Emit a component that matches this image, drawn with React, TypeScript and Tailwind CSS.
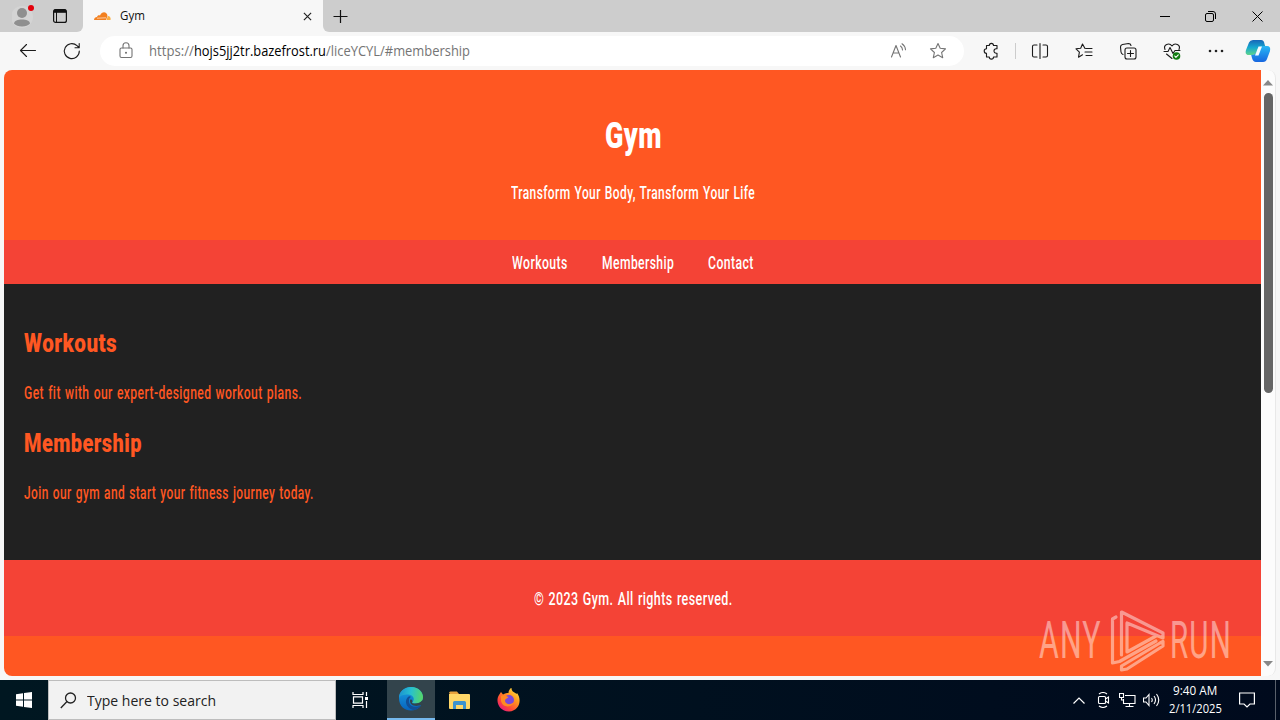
import { useLayoutEffect, useRef, type ReactNode } from "react";

function Fit({ w, className = "", children }: { w: number; className?: string; children: ReactNode }) {
  const ref = useRef<HTMLSpanElement>(null);
  useLayoutEffect(() => {
    const el = ref.current;
    if (el) el.style.transform = `scaleX(${w / el.offsetWidth})`;
  }, [w]);
  return (
    <span className={`block shrink-0 whitespace-nowrap ${className}`} style={{ width: w }}>
      <span ref={ref} className="inline-block origin-left">{children}</span>
    </span>
  );
}

function Icon({ size = 20, className = "", children }: { size?: number; className?: string; children: ReactNode }) {
  return (
    <svg width={size} height={size} viewBox="0 0 20 20" fill="none" stroke="currentColor" strokeWidth="1.1" strokeLinecap="round" strokeLinejoin="round" className={`block shrink-0 ${className}`}>
      {children}
    </svg>
  );
}

const star = "M10 2.500l2.200 4.800 5.300.6-3.900 3.600 1.100 5.200L10 14.100l-4.700 2.600 1.100-5.200L2.500 7.900l5.300-.6z";

function TabBar() {
  return (
    <div className="flex h-8 bg-[#f7f7f7]">
      <div className="flex h-8 w-[83px] shrink-0 rounded-br-md bg-[#cdcdcd] pl-3">
        <svg width="24" height="32" viewBox="0 0 24 32" className="block">
          <circle cx="10" cy="17" r="11" fill="#d4d4d4" />
          <circle cx="10" cy="13" r="5" fill="#8f8f8f" />
          <path d="M2 23.500c0-5.500 16-5.500 16 0-3 4-13 4-16 0z" fill="#8f8f8f" />
          <circle cx="19" cy="8" r="3" fill="#e3000b" />
        </svg>
        <svg width="16" height="32" viewBox="0 0 16 32" className="ml-4 block" fill="none" stroke="#111" strokeWidth="1.2">
          <rect x="1.600" y="9.600" width="12.800" height="12.800" rx="2" />
          <path d="M2 11.200h12" strokeWidth="3.200" />
          <path d="M4.500 12v10" strokeWidth="1" />
        </svg>
      </div>
      <div className="flex h-8 w-[240px] shrink-0 items-center pl-[11px]">
        <svg width="17" height="9" viewBox="0 0 17 9" className="block">
          <path d="M0 8c0-2 1.500-3 3-3C3.500 3 5 3 6 3.500 8-1 13-.5 13.500 4L12 8z" fill="#f38020" />
          <path d="M12.500 8l1.400-4C16 4 17 6 16.500 8z" fill="#fbad41" />
          <path d="M3 6.200l9-.4" stroke="#fff" strokeWidth=".6" />
        </svg>
        <Fit w={25} className="ml-[9px] font-['Open_Sans',sans-serif] text-[12.500px] text-[#111]">Gym</Fit>
        <svg width="9" height="9" viewBox="0 0 10 10" className="ml-[158px] block" stroke="#222" strokeWidth="1.3"><path d="M1 1l8 8M9 1L1 9" /></svg>
      </div>
      <div className="flex h-8 flex-1 items-center rounded-bl-md bg-[#cdcdcd] pl-[10px]">
        <svg width="15" height="15" viewBox="0 0 15 15" className="block" stroke="#111" strokeWidth="1.2"><path d="M7.500 1v13M.5 7.500h14" /></svg>
        <div className="ml-auto flex items-center gap-9 pr-[17px] text-black">
          <svg width="10" height="11" viewBox="0 0 10 11" stroke="currentColor" className="relative left-px"><path d="M0 5.500h10" /></svg>
          <svg width="11" height="11" viewBox="0 0 11 11" fill="none" stroke="currentColor"><rect x=".5" y="2.500" width="8" height="8" rx="1.500" /><path d="M3 .5h5q2.500 0 2.500 2.500v5" /></svg>
          <svg width="11" height="11" viewBox="0 0 11 11" stroke="currentColor"><path d="M.5.5l10 10M10.500.5l-10 10" /></svg>
        </div>
      </div>
    </div>
  );
}

function Toolbar() {
  return (
    <div className="flex h-[38px] items-center bg-[#f7f7f7] pl-[18px] text-[#1b1b1b]">
      <Icon><path d="M17.500 9.500h-15M8.500 3.500l-6 6 6 6" /></Icon>
      <Icon className="ml-6"><path d="M17.300 10A7.500 7.500 0 1 1 15 4.700l2 2M17.200 2.500v4.200H13" /></Icon>
      <div className="ml-[18px] flex h-[30px] w-[864px] shrink-0 items-center rounded-full bg-white pl-4 text-[#747474]">
        <Icon><rect x="4" y="7" width="12" height="9.500" rx="1.500" /><path d="M7 7V4.700a3 3 0 0 1 6 0V7" /><circle cx="10" cy="11.800" r=".5" fill="currentColor" /></Icon>
        <div className="ml-[13px] flex font-['Open_Sans',sans-serif] text-[14px] leading-5">
          <Fit w={45}>https://</Fit>
          <Fit w={132} className="text-black">hojs5jj2tr.bazefrost.ru</Fit>
          <Fit w={144}>/liceYCYL/#membership</Fit>
        </div>
        <Icon className="ml-auto"><path d="M3.500 16L8 4.500 12.500 16M5 12h6M12.500 5a5 5 0 0 1 2 4M14 2.800a8 8 0 0 1 3.500 6" /></Icon>
        <Icon className="mr-4 ml-5"><path d={star} /></Icon>
      </div>
      <Icon className="ml-[17px]"><path d="M5.500 4.500h2.800a2.100 2.100 0 0 1 4.200 0h3.500v3.300h-.8a2.200 2.200 0 0 0 0 4.400h.8v3.800h-3.500a2.100 2.100 0 0 1-4.200 0H5.500v-3.600a2.300 2.300 0 0 1 0-4.600z" /></Icon>
      <div className="ml-[14px] h-4 w-px bg-[#ccc]" />
      <Icon className="ml-[14px]"><path d="M7 4H4q-1.500 0-1.500 1.500v9Q2.500 16 4 16h3M13 4h3q1.500 0 1.500 1.500v9Q17.500 16 16 16h-3M10 2.500v15" /></Icon>
      <Icon className="ml-6"><path d="M11 7.500L8.500 3 6.700 7.200l-4.700.6 3.400 3.400-.9 5 4-2.400M12 7.500h6M11 11h7M12 14.500h6" /></Icon>
      <Icon className="ml-6"><rect x="7" y="7" width="11" height="11" rx="2" /><path d="M12.500 9.500v6M9.500 12.500h6M5 13.500a3 3 0 0 1-2-2.500L2.500 6q0-2 2-2.500l6-1q2 0 2.500 2" /></Icon>
      <Icon className="ml-6"><path d="M3 8.500C1 4 7 1 10 5c3-4 9-1 7 3.500M2 10.500h4l2-4 3 6 2-3h5M4.500 13l5.500 4.500" /><circle cx="14.500" cy="15" r="3.800" fill="#107c10" stroke="none" /><path d="M12.700 15l1.200 1.300 2.400-2.500" stroke="#fff" /></Icon>
      <svg width="16" height="4" viewBox="0 0 16 4" className="ml-[26px] block" fill="#222"><circle cx="2" cy="2" r="1.300" /><circle cx="8" cy="2" r="1.300" /><circle cx="14" cy="2" r="1.300" /></svg>
      <svg width="26" height="24" viewBox="0 0 26 24" className="ml-[21px] block shrink-0">
        <defs>
          <linearGradient id="copA" x1="0" y1="0" x2="0" y2="1"><stop stopColor="#1766b8" /><stop offset=".5" stopColor="#16a8cf" /><stop offset="1" stopColor="#5fd58b" /></linearGradient>
          <linearGradient id="copB" x1="0" y1="0" x2="0" y2="1"><stop stopColor="#28b8f5" /><stop offset="1" stopColor="#1766df" /></linearGradient>
        </defs>
        <path d="M8 1h8q3 0 3.500 4l1 3h-5q-2 0-3 3l-1 3q-1 2-4 2H4q-4.500 0-3-5L4 3.500Q5 1 8 1z" fill="url(#copA)" />
        <path d="M19 7h3q4 0 3 5l-3 8q-1 3-4 3h-7q-3 0-4-4l-.8-3q4.300 0 5.300-3l2-4q1-2 5.500-2z" fill="url(#copB)" />
        <path d="M13.500 7.500h3.500l-3.500 9H10z" fill="#f5fbff" />
      </svg>
    </div>
  );
}

function Watermark() {
  return (
    <div className="absolute top-[609px] left-[1039px] flex h-[64px] items-center text-white opacity-45">
      <Fit w={63} className="font-[Roboto,sans-serif] text-[51px] leading-[66px] tracking-[2px]">ANY</Fit>
      <svg width="56" height="64" viewBox="0 0 56 64" className="ml-2 block" fill="none" stroke="currentColor" strokeWidth="3.200" strokeLinejoin="round" strokeLinecap="round">
        <path d="M6 8L2.500 10v44l7-1.500L46 32M11.500 46V3L53 24v5L17 14M17 14v29l29-16M11.500 61v-4L50 34l3-1.500V37l-36 23z" />
      </svg>
      <Fit w={62} className="ml-1 font-[Roboto,sans-serif] text-[51px] leading-[66px] tracking-[2px]">RUN</Fit>
    </div>
  );
}

function Site() {
  return (
    <div className="flex h-[610px] bg-[#f7f7f7] pl-1">
      <div className="flex h-[606px] w-[1257px] shrink-0 flex-col overflow-hidden rounded-l-lg bg-[#ff5722] font-[Roboto,sans-serif] text-[17.500px] leading-6 font-medium tracking-[0.6px] [word-spacing:1px] text-white">
        <header className="flex h-[170px] flex-col items-center pt-[42px]">
          <h1 className="relative left-px"><Fit w={57} className="text-[36px] leading-[48px] font-black">Gym</Fit></h1>
          <p className="mt-[21px]"><Fit w={244}>Transform Your Body, Transform Your Life</Fit></p>
        </header>
        <nav className="flex h-11 items-center justify-center gap-[34px] bg-[#f44336] pt-px">
          <Fit w={56}>Workouts</Fit>
          <Fit w={72}>Membership</Fit>
          <Fit w={46}>Contact</Fit>
        </nav>
        <main className="h-[276px] bg-[#212121] px-5 pt-[41px] text-[#ff5722]">
          <h2><Fit w={93} className="text-[26px] leading-9 font-black">Workouts</Fit></h2>
          <p className="mt-5"><Fit w={278}>Get fit with our expert-designed workout plans.</Fit></p>
          <h2 className="mt-5"><Fit w={118} className="text-[26px] leading-9 font-black">Membership</Fit></h2>
          <p className="mt-5"><Fit w={290}>Join our gym and start your fitness journey today.</Fit></p>
        </main>
        <footer className="flex h-[76px] items-center justify-center bg-[#f44336] pt-px pl-px">
          <Fit w={199}>© 2023 Gym. All rights reserved.</Fit>
        </footer>
      </div>
      <div className="flex h-[606px] w-[15px] flex-col items-center rounded-r-lg border-r border-[#e8e8e8] bg-[#fcfcfc]">
        <svg width="10" height="6" viewBox="0 0 10 6" className="mt-[10px] block"><path d="M0 5.500L5 0l5 5.500z" fill="#888" /></svg>
        <div className="mt-[7px] h-[300px] w-[9px] rounded-full bg-[#666]" />
        <svg width="10" height="6" viewBox="0 0 10 6" className="mt-auto mb-[9px] block"><path d="M0 0l5 5.500L10 0z" fill="#888" /></svg>
      </div>
    </div>
  );
}

function Taskbar() {
  return (
    <div className="flex h-10 bg-linear-to-r from-[#001721] to-[#000a1d] text-white">
      <div className="flex w-12 items-center justify-center">
        <svg width="16" height="16" viewBox="0 0 16 16" fill="#fff"><path d="M0 2.200L7 1.200v6.300H0zM8 1.100L16 0v7.500H8zM0 8.500h7v6.300l-7-1zM8 8.500h8V16l-8-1.100z" /></svg>
      </div>
      <div className="flex w-72 items-center border border-[#bdbdbd] bg-[#f2f2f2] pl-[11px] text-[#222]">
        <svg width="17" height="17" viewBox="0 0 17 17" fill="none" stroke="currentColor" strokeWidth="1.300"><circle cx="10.500" cy="6" r="5" /><path d="M7 9.500L.8 16" /></svg>
        <Fit w={129} className="ml-[10px] font-['Open_Sans',sans-serif] text-[15px]">Type here to search</Fit>
      </div>
      <div className="flex w-[51px] items-center pl-4">
        <svg width="17" height="16" viewBox="0 0 17 16" fill="none" stroke="#fff" strokeWidth="1.200"><path d="M1 0v2.500h10V0M1 16v-2.500h10V16M1.500 4.800h9v6.400h-9zM14.500 0v4M14.500 9v7" /><path d="M13 5h3v3h-3z" fill="#fff" stroke="none" /></svg>
      </div>
      <div className="flex w-12 items-center justify-center border-b-2 border-[#76b9ed] bg-[#33444c]">
        <svg width="24" height="24" viewBox="0 0 24 24">
          <defs>
            <linearGradient id="edgeA" x1="0" y1=".2" x2="1" y2=".3"><stop stopColor="#1b91d0" /><stop offset=".5" stopColor="#28c0cf" /><stop offset="1" stopColor="#55d66a" /></linearGradient>
            <linearGradient id="edgeB" x1="0" y1="0" x2="0" y2="1"><stop stopColor="#1aa1e3" /><stop offset="1" stopColor="#0763bd" /></linearGradient>
          </defs>
          <path d="M0 11C0 5 5 0 12 0c8 0 12 6 12 10 0 5-4 7-8 7h5l1 1.500C16 27 0 25 0 11z" fill="url(#edgeB)" />
          <path d="M0 11C0 4 6 0 12 0c8 0 12 6 12 10 0 5-4 6.500-8 6.500-3 0-3-1-2-2 2-3 0-7-5-7-4 0-8 1-9 3.500z" fill="url(#edgeA)" />
          <path d="M9 10c-5 5 0 13 7 13 3-1 5-3 6-5-6 4-13 1-12-5 0-2 1-2 2-3-1-1-2-1-3 0z" fill="#124f96" />
          <path d="M13.500 14.500c-.8 1-1 2 2.500 2 3 0 6-1 7.500-3.500l-.5 4.500c-6 3-12 1-12-3.500 0-2 2-2 2.500.5z" fill="#33444c" />
        </svg>
      </div>
      <div className="flex w-[49px] items-center justify-center">
        <svg width="22" height="19" viewBox="0 0 22 19"><path d="M0 2Q0 .5 1.500.5H8L10 3h-9z" fill="#e8a33d" /><path d="M0 3h20q1 0 1 1v13q0 1-1 1H1q-1 0-1-1z" fill="#ffd768" /><path d="M4 11.500Q4 10 5.500 10h10q1.500 0 1.500 1.500V18h-3v-4H7v4H4z" fill="#3d93cf" /></svg>
      </div>
      <div className="flex w-[49px] items-center justify-center">
        <svg width="24" height="24" viewBox="0 0 24 24">
          <defs><linearGradient id="ff" x1="1" y1="0" x2=".2" y2="1"><stop stopColor="#fff44f" /><stop offset=".4" stopColor="#ff9a1f" /><stop offset=".75" stopColor="#ff4638" /><stop offset="1" stopColor="#e31587" /></linearGradient></defs>
          <path d="M4 4l2 2.500C8 5 10 5 11.500 5c0-3 2-5 3-5 0 4 3 4 5 6l.5-1c5 6 3 18-8 18.500C2 23.500-2 13 2 7z" fill="url(#ff)" />
          <circle cx="12" cy="12" r="5" fill="#7b48d8" />
          <path d="M4 8c3-2 5 0 7.500 1-1 2-3.500 1-3.500 4 1 4 6 4 9 1-1 5-11 7-13-1z" fill="#ff8a22" />
        </svg>
      </div>
      <div className="ml-auto flex items-center">
        <svg width="12" height="7" viewBox="0 0 12 7" fill="none" stroke="#fff" strokeWidth="1.200"><path d="M.5 6.500L6 1l5.500 5.500" /></svg>
        <svg width="13" height="16" viewBox="0 0 13 16" className="ml-3 block" fill="none" stroke="#fff" strokeWidth="1.100"><rect x="1.500" y="4.500" width="7" height="7" rx="1" /><path d="M8.500 7l3-2v6l-3-2M2 2q4-3 8 0M2 14q4 3 8 0" /></svg>
        <svg width="17" height="14" viewBox="0 0 17 14" className="ml-[9px] block" fill="none" stroke="#fff" strokeWidth="1.100"><path d="M6 2.500h10v8H4.500V6M10.500 10.500v3M6.500 13.500h8M.5.5h4v4h-4zM2.500 4.500V7h2" /></svg>
        <svg width="17" height="14" viewBox="0 0 17 14" className="ml-[7px] block" fill="none" stroke="#fff" strokeWidth="1.100"><path d="M.5 5h2.500l3-3.500v11L3 9H.5zM8.500 5q1.500 2 0 4M11 3q3 4 0 8M13.500 1q4.500 6 0 12" /></svg>
        <div className="ml-[9px] flex w-[53px] flex-col font-['Open_Sans',sans-serif] text-[12px] leading-[18px]">
          <Fit w={44} className="ml-1">9:40 AM</Fit>
          <Fit w={53}>2/11/2025</Fit>
        </div>
        <svg width="16" height="16" viewBox="0 0 16 16" className="mr-5 ml-[17px] block" fill="none" stroke="#fff" strokeWidth="1.200"><path d="M.6 1h14.800v11H11l-3 3-3-3H.6z" /></svg>
        <div className="mr-1 h-10 w-px bg-[#59606b]" />
      </div>
    </div>
  );
}

export default function App() {
  return (
    <div className="relative h-[720px] w-[1280px] overflow-hidden bg-[#f7f7f7]">
      <TabBar />
      <Toolbar />
      <Site />
      <Taskbar />
      <Watermark />
    </div>
  );
}
